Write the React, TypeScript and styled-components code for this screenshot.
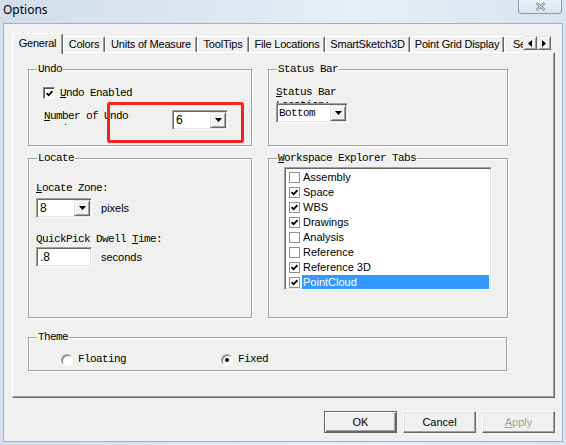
import React from 'react';
import styled, { createGlobalStyle } from 'styled-components';

const UI = `"Liberation Sans", Arial, sans-serif`;
const MONO = `"Liberation Mono", "Courier New", monospace`;

const GlobalStyle = createGlobalStyle`
  html, body {
    margin: 0;
    padding: 0;
    background: #d9e4f1;
  }
  body {
    width: 566px;
    height: 445px;
    overflow: hidden;
  }
`;

const Window = styled.div`
  width: 566px;
  height: 445px;
  box-sizing: border-box;
  display: flex;
  flex-direction: column;
  background: linear-gradient(90deg, #d2deec 0%, #dfe8f3 45%, #e8eef6 62%, #d8e3f0 100%);
`;

const TitleBar = styled.div`
  height: 23px;
  flex: none;
  display: flex;
  justify-content: space-between;
  align-items: flex-start;
  padding: 0 4px 0 3px;
`;

const Title = styled.div`
  font: 12px/20px "Noto Sans", "Liberation Sans", sans-serif;
  color: #000;
`;

const CloseButton = styled.div`
  width: 44px;
  height: 14px;
  box-sizing: border-box;
  border: 1px solid #8e9bae;
  border-top: none;
  border-radius: 0 0 4px 4px;
  background: linear-gradient(#eef2f7, #dbe3ed);
  display: flex;
  align-items: center;
  justify-content: center;
`;

const Client = styled.div`
  flex: 1;
  margin: 0 3px 3px;
  border: 1px solid #a4b0c0;
  background: #f0f0f0;
  display: flex;
  flex-direction: column;
  padding: 9px 7px 0 8px;
`;

const TabStrip = styled.div`
  height: 19px;
  flex: none;
  display: flex;
  align-items: flex-start;
  padding-right: 4px;
  position: relative;
  z-index: 2;
`;

const TabRow = styled.div`
  flex: 1;
  height: 21px;
  display: flex;
  align-items: flex-end;
  overflow: hidden;
`;

const Tab = styled.div<{ $active?: boolean; $width: number }>`
  flex: none;
  box-sizing: border-box;
  width: ${p => p.$width}px;
  height: ${p => (p.$active ? 21 : 16)}px;
  margin-bottom: ${p => (p.$active ? 0 : 2)}px;
  padding-top: ${p => (p.$active ? 2 : 0)}px;
  border: 1px solid #fff;
  border-right-color: #696969;
  border-bottom: none;
  border-radius: 2px 2px 0 0;
  box-shadow: inset -1px 0 #a0a0a0;
  background: #f0f0f0;
  font: 11px/14px ${UI};
  letter-spacing: -0.2px;
  color: #000;
  text-align: center;
  white-space: nowrap;
  overflow: hidden;
`;

const ScrollArrows = styled.div`
  flex: none;
  display: flex;
  margin-top: 3px;
`;

const ArrowButton = styled.div`
  width: 14px;
  height: 14px;
  box-sizing: border-box;
  border: 1px solid;
  border-color: #e3e3e3 #696969 #696969 #e3e3e3;
  box-shadow: inset 1px 1px #fff, inset -1px -1px #a0a0a0;
  background: #f0f0f0;
  display: flex;
  align-items: center;
  justify-content: center;
`;

const Page = styled.div`
  flex: none;
  height: 346px;
  box-sizing: border-box;
  border: 1px solid;
  border-color: #fff #696969 #696969 #fff;
  box-shadow: inset -1px -1px #a0a0a0;
  padding: 16px 0 0 15px;
  display: grid;
  grid-template-columns: 224px 240px;
  grid-template-rows: 77px 160px 41px;
  column-gap: 16px;
  row-gap: 12px;
`;

const GroupBox = styled.div<{ $wide?: boolean }>`
  position: relative;
  box-sizing: border-box;
  border: 1px solid #a0a0a0;
  box-shadow: inset 1px 1px #fff, 1px 1px #fff;
  ${p => p.$wide && 'grid-column: 1 / -1; width: 479px; margin-top: 7px;'}
`;

const Caption = styled.div`
  position: absolute;
  top: -7px;
  left: 8px;
  padding: 0 1px;
  background: #f0f0f0;
  font: 11px/13px ${MONO};
  letter-spacing: -0.6px;
  color: #000;
  white-space: nowrap;
`;

const MonoLabel = styled.div<{ $clip?: number }>`
  font: 11px/13px ${MONO};
  letter-spacing: -0.6px;
  color: #000;
  white-space: nowrap;
  ${p => p.$clip && `height: ${p.$clip}px; overflow: hidden; white-space: normal;`}
`;

const UndoBody = styled.div`
  padding: 17px 0 0 14px;
`;

const CheckRow = styled.div`
  display: flex;
  align-items: center;
  gap: 5px;
  height: 12px;
`;

const UndoCountRow = styled.div`
  display: flex;
  align-items: flex-start;
  margin-top: 11px;
  padding-left: 1px;
`;

const UndoCountLabel = styled(MonoLabel)`
  width: 128px;
`;

const Highlight = styled.div`
  position: absolute;
  left: 78px;
  top: 32px;
  width: 137px;
  height: 41px;
  box-sizing: border-box;
  border: 3px solid #f5231c;
  border-radius: 3px;
`;

const StatusBody = styled.div`
  padding: 16px 0 0 7px;
`;

const LocateBody = styled.div`
  padding: 23px 0 0 7px;
`;

const FieldRow = styled.div<{ $gap: number }>`
  display: flex;
  align-items: center;
  gap: 9px;
  margin-top: ${p => p.$gap}px;
`;

const Unit = styled.span`
  font: 11px/14px ${UI};
  color: #000;
`;

const Sunken = styled.div<{ $width: number }>`
  width: ${p => p.$width}px;
  height: 20px;
  box-sizing: border-box;
  border: 1px solid;
  border-color: #a0a0a0 #fff #fff #a0a0a0;
  box-shadow: inset 1px 1px #696969, inset -1px -1px #e3e3e3;
  background: #fff;
  padding: 1px;
  display: flex;
  flex: none;
`;

const FieldText = styled.div<{ $mono?: boolean }>`
  flex: 1;
  padding-left: ${p => (p.$mono ? 1 : 2)}px;
  font: ${p => (p.$mono ? `11px/16px ${MONO}` : `12px/16px ${UI}`)};
  letter-spacing: ${p => (p.$mono ? '-0.6px' : '0')};
  color: #000;
`;

const DropButton = styled.div`
  width: 16px;
  height: 16px;
  box-sizing: border-box;
  border: 1px solid;
  border-color: #e3e3e3 #696969 #696969 #e3e3e3;
  box-shadow: inset 1px 1px #fff, inset -1px -1px #a0a0a0;
  background: #f0f0f0;
  display: flex;
  align-items: center;
  justify-content: center;
`;

const ListBody = styled.div`
  padding: 8px 0 0 15px;
`;

const ListBox = styled.div`
  width: 208px;
  height: 123px;
  box-sizing: border-box;
  border: 1px solid;
  border-color: #a0a0a0 #fff #fff #a0a0a0;
  box-shadow: inset 1px 1px #696969, inset -1px -1px #e3e3e3;
  background: #fff;
  padding: 2px 2px 1px 2px;
  overflow: hidden;
`;

const ListRow = styled.div`
  height: 15px;
  display: flex;
  align-items: center;
`;

const ListText = styled.div<{ $selected?: boolean }>`
  flex: 1;
  height: 15px;
  margin-left: 2px;
  padding-left: 1px;
  font: 11px/15px ${UI};
  color: ${p => (p.$selected ? '#fff' : '#000')};
  background: ${p => (p.$selected ? '#3399ff' : 'transparent')};
`;

const CheckBox = styled.div<{ $size: number; $sunken?: boolean }>`
  width: ${p => p.$size}px;
  height: ${p => p.$size}px;
  margin-left: ${p => (p.$sunken ? 0 : 2)}px;
  box-sizing: border-box;
  flex: none;
  background: #fff;
  border: 1px solid #8e8f8f;
  ${p => p.$sunken && 'border-color: #808080 #fff #fff #808080; box-shadow: inset 1px 1px #505050;'}
  display: flex;
  align-items: center;
  justify-content: center;
`;

const ThemeRow = styled.div`
  display: flex;
  padding: 15px 0 0 32px;
`;

const RadioOption = styled.div`
  width: 160px;
  display: flex;
  align-items: center;
  gap: 5px;
`;

const Radio = styled.div`
  width: 12px;
  height: 12px;
  box-sizing: border-box;
  border-radius: 50%;
  border: 1px solid;
  border-color: #a0a0a0 #fff #fff #a0a0a0;
  box-shadow: inset 1px 1px #808080;
  background: #fff;
  display: flex;
  align-items: center;
  justify-content: center;
`;

const RadioDot = styled.div`
  width: 4px;
  height: 4px;
  border-radius: 50%;
  background: #000;
`;

const ButtonRow = styled.div`
  display: flex;
  justify-content: flex-end;
  gap: 6px;
  margin-top: 13px;
`;

const Button = styled.div<{ $default?: boolean; $disabled?: boolean }>`
  width: 73px;
  height: 22px;
  box-sizing: border-box;
  border: 1px solid;
  border-color: ${p => (p.$default ? '#646464' : '#fff #696969 #696969 #fff')};
  box-shadow: ${p =>
    p.$default
      ? 'inset 1px 1px #fff, inset -1px -1px #696969, inset -2px -2px #a0a0a0'
      : 'inset -1px -1px #a0a0a0, inset 1px 1px #e3e3e3'};
  background: #f0f0f0;
  font: 11px/20px ${UI};
  color: ${p => (p.$disabled ? '#a0a0a0' : '#000')};
  text-align: center;
`;

const Arrow = ({ dir }: { dir: 'left' | 'right' | 'down' }) => {
  if (dir === 'down') {
    return (
      <svg width="7" height="4" viewBox="0 0 7 4">
        <polygon points="0,0 7,0 3.5,4" fill="#000" />
      </svg>
    );
  }
  return (
    <svg width="4" height="7" viewBox="0 0 4 7">
      <polygon points={dir === 'left' ? '4,0 4,7 0,3.5' : '0,0 0,7 4,3.5'} fill="#000" />
    </svg>
  );
};

const Tick = () => (
  <svg width="7" height="7" viewBox="0 0 7 7">
    <polyline points="0.6,3.2 2.6,5.3 6.4,1.2" fill="none" stroke="#000" strokeWidth="1.8" />
  </svg>
);

const Combo = ({ value, width, mono }: { value: string; width: number; mono?: boolean }) => (
  <Sunken $width={width}>
    <FieldText $mono={mono}>{value}</FieldText>
    <DropButton>
      <Arrow dir="down" />
    </DropButton>
  </Sunken>
);

const tabs = [
  { label: 'General', width: 51 },
  { label: 'Colors', width: 42 },
  { label: 'Units of Measure', width: 92 },
  { label: 'ToolTips', width: 52 },
  { label: 'File Locations', width: 76 },
  { label: 'SmartSketch3D', width: 85 },
  { label: 'Point Grid Display', width: 94 },
  { label: 'Settings', width: 56 },
];

const explorerTabs = [
  { label: 'Assembly', on: false },
  { label: 'Space', on: true },
  { label: 'WBS', on: true },
  { label: 'Drawings', on: true },
  { label: 'Analysis', on: false },
  { label: 'Reference', on: false },
  { label: 'Reference 3D', on: true },
  { label: 'PointCloud', on: true },
];

export default function App() {
  return (
    <>
      <GlobalStyle />
      <Window>
        <TitleBar>
          <Title>Options</Title>
          <CloseButton>
            <svg width="11" height="9" viewBox="0 0 11 9">
              <path d="M1.5 1 L9.5 8 M9.5 1 L1.5 8" stroke="#7d8a9c" strokeWidth="2.6" />
              <path d="M1.5 1 L9.5 8 M9.5 1 L1.5 8" stroke="#f5f7fa" strokeWidth="1" />
            </svg>
          </CloseButton>
        </TitleBar>

        <Client>
          <TabStrip>
            <TabRow>
              {tabs.map((t, i) => (
                <Tab key={t.label} $active={i === 0} $width={t.width}>
                  {t.label}
                </Tab>
              ))}
            </TabRow>
            <ScrollArrows>
              <ArrowButton>
                <Arrow dir="left" />
              </ArrowButton>
              <ArrowButton>
                <Arrow dir="right" />
              </ArrowButton>
            </ScrollArrows>
          </TabStrip>

          <Page>
            <GroupBox>
              <Caption>Undo</Caption>
              <UndoBody>
                <CheckRow>
                  <CheckBox $size={12} $sunken>
                    <Tick />
                  </CheckBox>
                  <MonoLabel>
                    <u>U</u>ndo Enabled
                  </MonoLabel>
                </CheckRow>
                <UndoCountRow>
                  <UndoCountLabel $clip={15}>
                    <u>N</u>umber of Undo
                    <br />
                    Actions:
                  </UndoCountLabel>
                  <Combo value="6" width={56} />
                </UndoCountRow>
              </UndoBody>
              <Highlight />
            </GroupBox>

            <GroupBox>
              <Caption>Status Bar</Caption>
              <StatusBody>
                <MonoLabel $clip={17}>
                  <u>S</u>tatus Bar
                  <br />
                  Location:
                </MonoLabel>
                <Combo value="Bottom" width={72} mono />
              </StatusBody>
            </GroupBox>

            <GroupBox>
              <Caption>Locate</Caption>
              <LocateBody>
                <MonoLabel>
                  <u>L</u>ocate Zone:
                </MonoLabel>
                <FieldRow $gap={3}>
                  <Combo value="8" width={56} />
                  <Unit>pixels</Unit>
                </FieldRow>
                <FieldRow $gap={15}>
                  <MonoLabel>
                    QuickPick Dwell <u>T</u>ime:
                  </MonoLabel>
                </FieldRow>
                <FieldRow $gap={1}>
                  <Sunken $width={56}>
                    <FieldText>.8</FieldText>
                  </Sunken>
                  <Unit>seconds</Unit>
                </FieldRow>
              </LocateBody>
            </GroupBox>

            <GroupBox>
              <Caption>
                <u>W</u>orkspace Explorer Tabs
              </Caption>
              <ListBody>
                <ListBox>
                  {explorerTabs.map((item, i) => (
                    <ListRow key={item.label}>
                      <CheckBox $size={11}>{item.on && <Tick />}</CheckBox>
                      <ListText $selected={i === explorerTabs.length - 1}>{item.label}</ListText>
                    </ListRow>
                  ))}
                </ListBox>
              </ListBody>
            </GroupBox>

            <GroupBox $wide>
              <Caption>Theme</Caption>
              <ThemeRow>
                <RadioOption>
                  <Radio />
                  <MonoLabel>Floating</MonoLabel>
                </RadioOption>
                <RadioOption>
                  <Radio>
                    <RadioDot />
                  </Radio>
                  <MonoLabel>Fixed</MonoLabel>
                </RadioOption>
              </ThemeRow>
            </GroupBox>
          </Page>

          <ButtonRow>
            <Button $default>OK</Button>
            <Button>Cancel</Button>
            <Button $disabled>
              <u>A</u>pply
            </Button>
          </ButtonRow>
        </Client>
      </Window>
    </>
  );
}
